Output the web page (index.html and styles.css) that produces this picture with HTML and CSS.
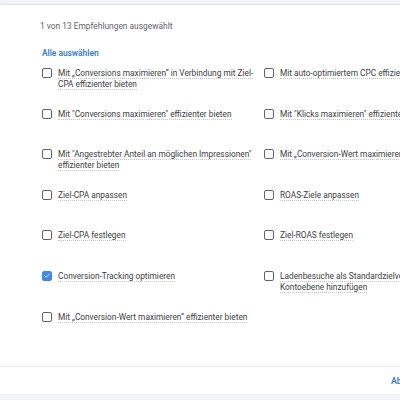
FILE: index.html
```html
<!DOCTYPE html>
<html lang="de">
<head>
    <meta charset="UTF-8">
    <meta name="viewport" content="width=device-width, initial-scale=1.0">
    <title>Empfehlungen</title>
    <link rel="stylesheet" href="styles.css">
</head>
<body>
    <div class="card">
        <div class="summary">1 von 13 Empfehlungen ausgewählt</div>

        <div class="select-all">Alle auswählen</div>

        <div class="options">
            <label class="option">
                <span class="box"></span>
                <span class="label"><span class="hint">Mit „Conversions maximieren“ in Verbindung mit Ziel-CPA effizienter bieten</span></span>
            </label>
            <label class="option">
                <span class="box"></span>
                <span class="label"><span class="hint">Mit auto-optimiertem CPC effizienter bieten</span></span>
            </label>

            <label class="option">
                <span class="box"></span>
                <span class="label"><span class="hint">Mit "Conversions maximieren" effizienter bieten</span></span>
            </label>
            <label class="option">
                <span class="box"></span>
                <span class="label"><span class="hint">Mit "Klicks maximieren" effizienter bieten</span></span>
            </label>

            <label class="option">
                <span class="box"></span>
                <span class="label"><span class="hint">Mit "Angestrebter Anteil an möglichen Impressionen" effizienter bieten</span></span>
            </label>
            <label class="option">
                <span class="box"></span>
                <span class="label"><span class="hint">Mit „Conversion-Wert maximieren“ effizienter bieten</span></span>
            </label>

            <label class="option">
                <span class="box"></span>
                <span class="label"><span class="hint">Ziel-CPA anpassen</span></span>
            </label>
            <label class="option">
                <span class="box"></span>
                <span class="label"><span class="hint">ROAS-Ziele anpassen</span></span>
            </label>

            <label class="option">
                <span class="box"></span>
                <span class="label"><span class="hint">Ziel-CPA festlegen</span></span>
            </label>
            <label class="option">
                <span class="box"></span>
                <span class="label"><span class="hint">Ziel-ROAS festlegen</span></span>
            </label>

            <label class="option">
                <span class="box checked">
                    <svg viewBox="0 0 12 12" width="9" height="9"><path d="M2.2 6.2 L4.8 8.6 L9.8 3.4" fill="none" stroke="#fff" stroke-width="1.3"/></svg>
                </span>
                <span class="label"><span class="hint">Conversion-Tracking optimieren</span></span>
            </label>
            <label class="option">
                <span class="box"></span>
                <span class="label"><span class="hint">Ladenbesuche als Standardzielvorhaben auf Kontoebene hinzufügen</span></span>
            </label>

            <label class="option">
                <span class="box"></span>
                <span class="label"><span class="hint">Mit „Conversion-Wert maximieren“ effizienter bieten</span></span>
            </label>
        </div>

        <div class="footer">
            <span class="cancel">Abbrechen</span>
        </div>
    </div>
</body>
</html>
```

FILE: styles.css
```css
html, body {
    overflow: hidden;
}
body {
    margin: 0;
    background: #f1f3f4;
    font-family: Roboto, "Liberation Sans", Arial, sans-serif;
    color: #3c4043;
}
.card {
    width: 520px;
    height: 389px;
    margin-top: 5px;
    background: white;
    box-shadow: 0 0 2px rgba(60,64,67,0.25);
    display: flex;
    flex-direction: column;
}
.summary {
    padding: 15px 0 0 40px;
    font-size: 8.4px;
    line-height: 12px;
    color: #5f6368;
}
.select-all {
    margin: 15px 0 0 42px;
    font-size: 8.4px;
    line-height: 12px;
    font-weight: 500;
    color: #1a73e8;
}
.options {
    display: grid;
    grid-template-columns: 222px 240px;
    grid-auto-rows: 40.6px;
    padding-left: 42px;
    margin-top: 9px;
    flex: 1;
}
.option {
    display: flex;
    align-items: flex-start;
    gap: 6px;
    font-size: 8.3px;
    line-height: 11px;
}
.box {
    flex: none;
    width: 8px;
    height: 8px;
    border: 1.6px solid #5f6368;
    border-radius: 2px;
    display: flex;
    align-items: center;
    justify-content: center;
}
.box.checked {
    background: #3b87f5;
    border-color: #3b87f5;
}
.label {
    width: 198px;
}
.hint {
    border-bottom: 1px dotted #c4c7c9;
}
.footer {
    flex: none;
    height: 27px;
    border-top: 1px solid #e8eaed;
    display: flex;
    align-items: center;
    padding-left: 391px;
}
.cancel {
    font-size: 8.8px;
    font-weight: 500;
    color: #1a73e8;
}
```
